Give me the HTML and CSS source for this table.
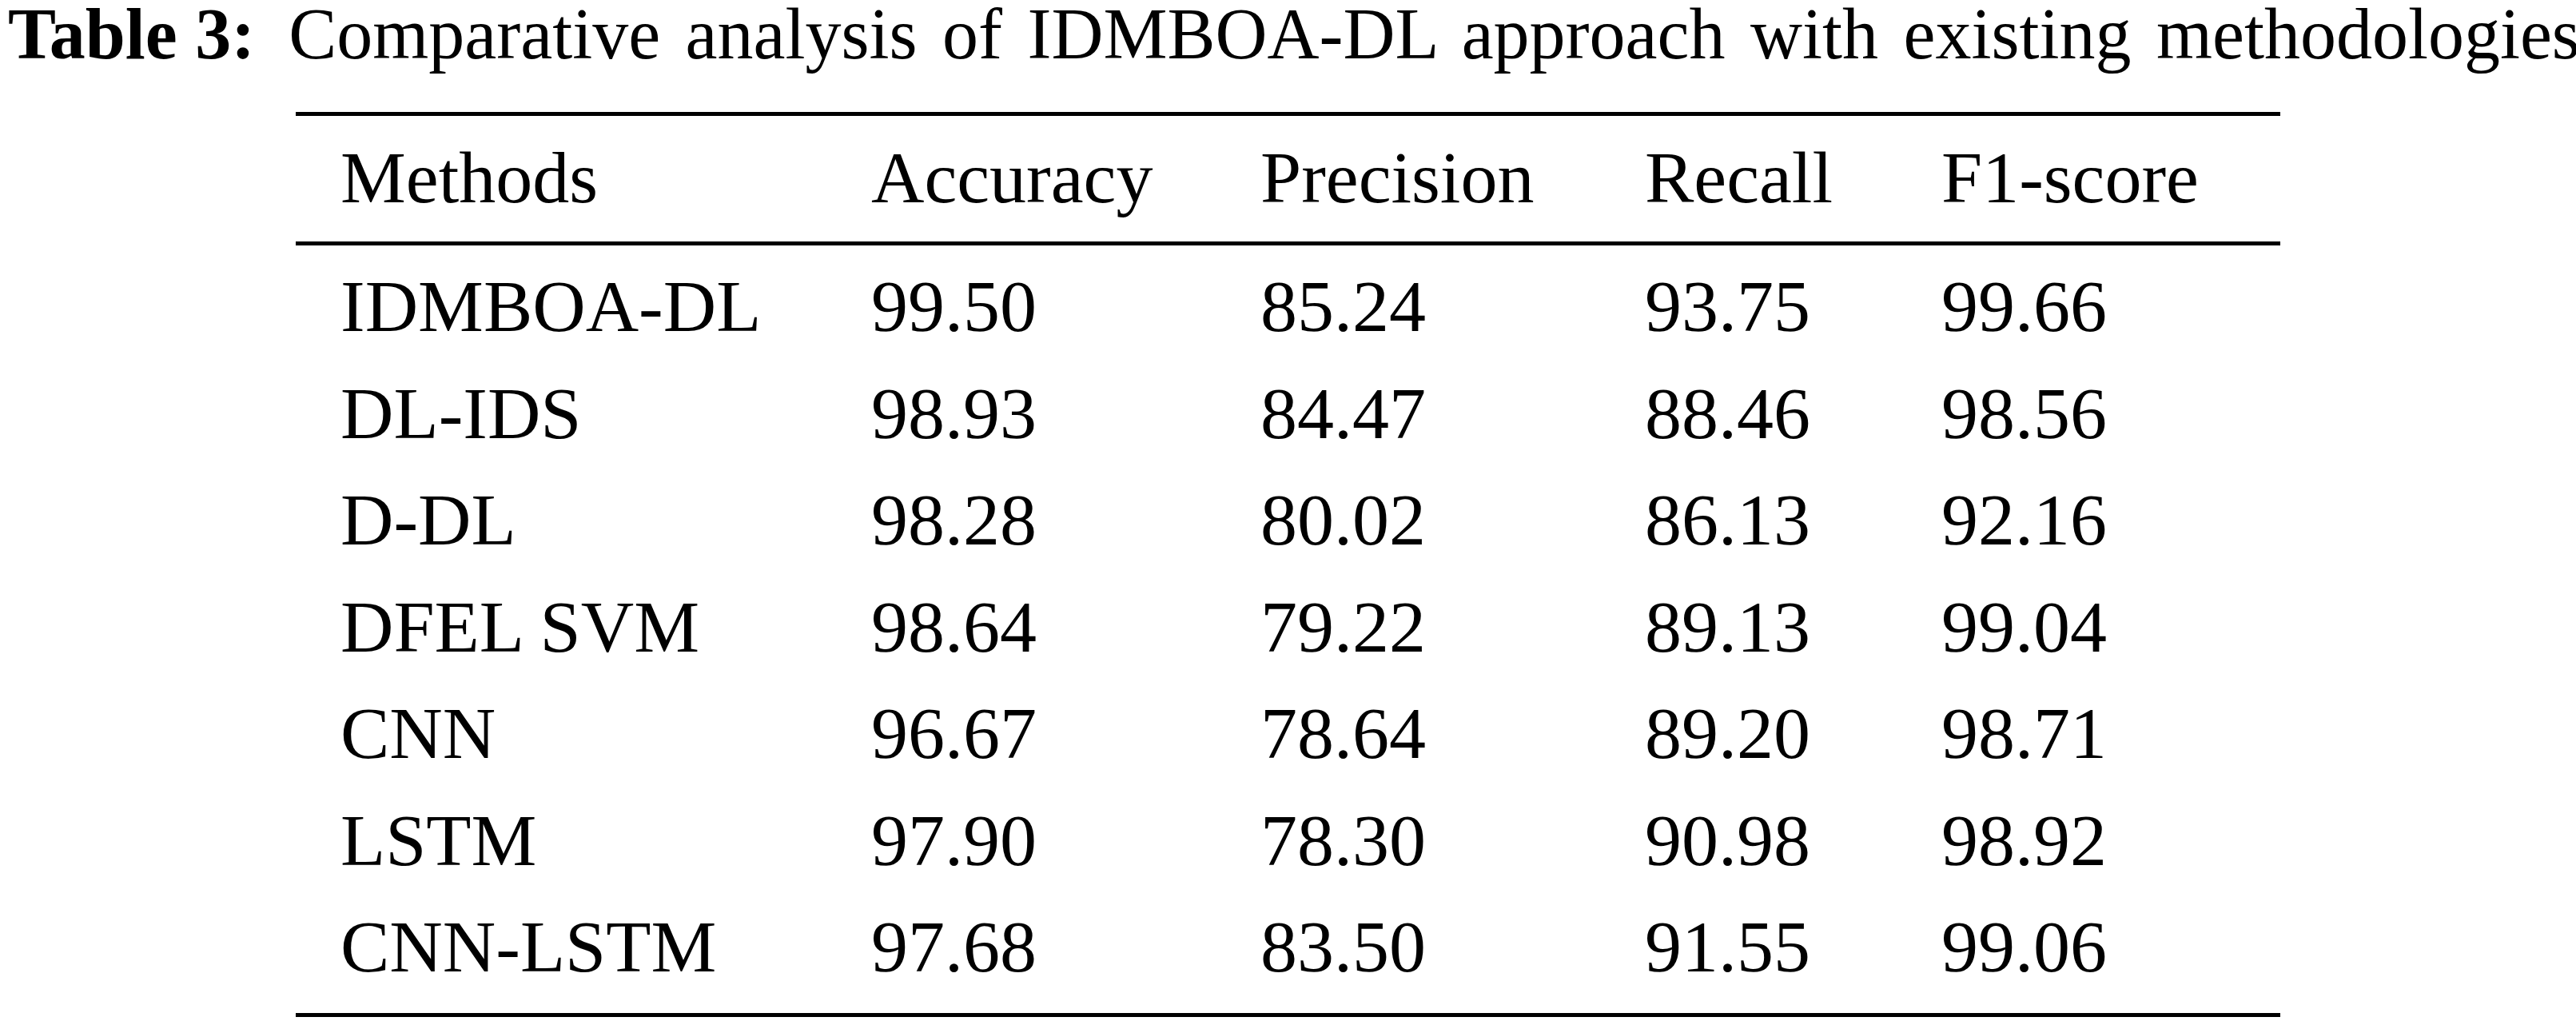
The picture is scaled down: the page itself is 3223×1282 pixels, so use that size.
FILE: index.html
```html
<!DOCTYPE html>
<html lang="en">
<head>
<meta charset="utf-8">
<title>Table 3</title>
<link rel="stylesheet" href="styles.css">
</head>
<body>
<div class="page">
  <p class="caption"><b class="label">Table 3:</b><span class="caption-text">Comparative analysis of IDMBOA-DL approach with existing methodologies</span></p>
  <table class="results">
    <colgroup>
      <col class="c1"><col class="c2"><col class="c3"><col class="c4"><col class="c5">
    </colgroup>
    <thead>
      <tr><th>Methods</th><th>Accuracy</th><th>Precision</th><th>Recall</th><th>F1-score</th></tr>
    </thead>
    <tbody>
      <tr><td>IDMBOA-DL</td><td>99.50</td><td>85.24</td><td>93.75</td><td>99.66</td></tr>
      <tr><td>DL-IDS</td><td>98.93</td><td>84.47</td><td>88.46</td><td>98.56</td></tr>
      <tr><td>D-DL</td><td>98.28</td><td>80.02</td><td>86.13</td><td>92.16</td></tr>
      <tr><td>DFEL SVM</td><td>98.64</td><td>79.22</td><td>89.13</td><td>99.04</td></tr>
      <tr><td>CNN</td><td>96.67</td><td>78.64</td><td>89.20</td><td>98.71</td></tr>
      <tr><td>LSTM</td><td>97.90</td><td>78.30</td><td>90.98</td><td>98.92</td></tr>
      <tr><td>CNN-LSTM</td><td>97.68</td><td>83.50</td><td>91.55</td><td>99.06</td></tr>
    </tbody>
  </table>
</div>
</body>
</html>
```
FILE: styles.css
```css
html, body {
  margin: 0;
  padding: 0;
  background: #ffffff;
}

.page {
  font-family: "Liberation Serif", "Times New Roman", serif;
  font-size: 92px;
  color: #000000;
  width: 3223px;
  height: 1282px;
  overflow: hidden;
}

.caption {
  margin: 0 0 55px 0;
  padding-left: 10px;
  font-size: 90px;
  line-height: 85px;
  white-space: nowrap;
}

.label {
  font-weight: bold;
  margin-right: 42px;
}

.caption-text {
  word-spacing: 9px;
}

.results {
  margin-left: 370px;
  border-collapse: collapse;
  table-layout: fixed;
  width: 2483px;
  border-top: 5px solid #000;
  border-bottom: 5px solid #000;
}

.c1 { width: 664px; }
.c2 { width: 487px; }
.c3 { width: 481px; }
.c4 { width: 371px; }
.c5 { width: 480px; }

.results th,
.results td {
  font-weight: normal;
  text-align: left;
  padding: 19.5px 0 0 56px;
  line-height: 114px;
  white-space: nowrap;
}

.results thead th {
  padding-bottom: 23px;
  border-bottom: 5px solid #000;
}

.results tbody tr:last-child td {
  padding-bottom: 26px;
}
```
